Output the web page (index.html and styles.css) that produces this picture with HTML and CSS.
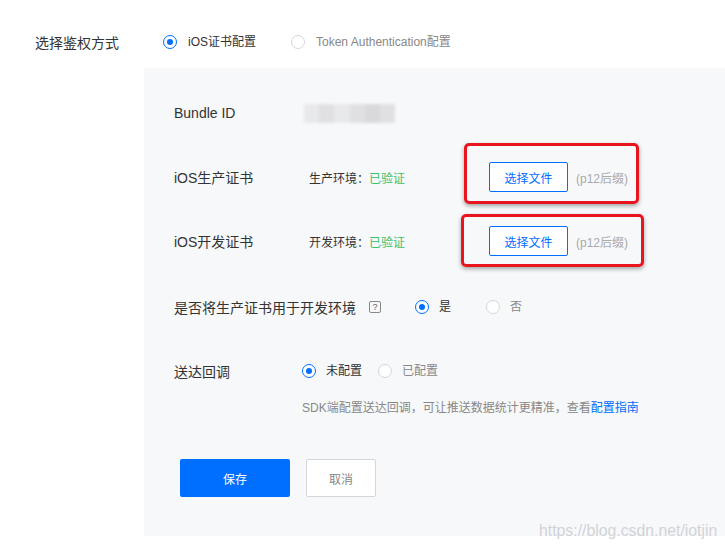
FILE: index.html
```html
<html>
  <head>
    <meta charset="utf-8">
    <title>选择鉴权方式</title>
    <link rel="stylesheet" href="styles.css">
  </head>
  <body>
    <div class="auth-row">
      <span class="auth-title">选择鉴权方式</span>
      <label class="radio radio-top checked"><i></i>iOS证书配置</label>
      <label class="radio radio-top muted"><i></i>Token Authentication配置</label>
    </div>

    <div class="panel">
      <div class="row row-bundle">
        <span class="row-label">Bundle ID</span>
        <span class="bundle-blur"><b></b><b></b><b></b><b></b><b></b><b></b></span>
      </div>

      <div class="row row-cert">
        <span class="row-label">iOS生产证书</span>
        <span class="status">生产环境：<em>已验证</em></span>
        <span class="file-group">
          <button class="btn-file">选择文件</button>
          <span class="hint">(p12后缀)</span>
          <span class="mark mark-one"></span>
        </span>
      </div>

      <div class="row row-cert">
        <span class="row-label">iOS开发证书</span>
        <span class="status">开发环境：<em>已验证</em></span>
        <span class="file-group">
          <button class="btn-file">选择文件</button>
          <span class="hint">(p12后缀)</span>
          <span class="mark mark-two"></span>
        </span>
      </div>

      <div class="row row-reuse">
        <span class="row-label-auto">是否将生产证书用于开发环境</span>
        <span class="help">?</span>
        <label class="radio radio-yes checked"><i></i>是</label>
        <label class="radio muted"><i></i>否</label>
      </div>

      <div class="row row-callback">
        <span class="row-label narrow">送达回调</span>
        <label class="radio radio-cb checked"><i></i>未配置</label>
        <label class="radio muted"><i></i>已配置</label>
      </div>

      <div class="tip">SDK端配置送达回调，可让推送数据统计更精准，查看<a href="#">配置指南</a></div>

      <div class="actions">
        <button class="btn-save">保存</button>
        <button class="btn-cancel">取消</button>
      </div>
    </div>

    <div class="watermark">https://blog.csdn.net/iotjin</div>
  </body>
</html>
```

FILE: styles.css
```css
:root {
  --blue: #006eff;
  --green: #3cbf6a;
  --panel: #f7f8fa;
}
body {
  margin: 0;
  font-family: 'Liberation Sans', 'Noto Sans CJK SC', sans-serif;
  color: #333;
  background: #fff;
  position: relative;
  width: 725px;
  height: 549px;
  overflow: hidden;
}
button {
  font-family: inherit;
  cursor: pointer;
}

/* top radio row */
.auth-row {
  display: flex;
  align-items: center;
  height: 28px;
  padding-top: 28px;
  padding-left: 35px;
}
.auth-title {
  width: 128px;
  font-size: 14px;
}

/* radios */
.radio {
  display: flex;
  align-items: center;
  font-size: 12px;
  color: #333;
  line-height: 16px;
}
.radio i {
  box-sizing: border-box;
  width: 14px;
  height: 14px;
  border: 1px solid #d3d6db;
  border-radius: 50%;
  background: #fff;
  margin-right: 10px;
  position: relative;
}
.radio.checked i {
  border-color: var(--blue);
}
.radio.checked i::after {
  content: '';
  position: absolute;
  left: 3px;
  top: 3px;
  width: 6px;
  height: 6px;
  border-radius: 50%;
  background: var(--blue);
}
.radio.muted {
  color: #888;
}
.radio-top i {
  margin-right: 11px;
}
.radio-top.checked {
  margin-right: 35px;
}
.radio-yes {
  margin-right: 35px;
}
.radio-cb {
  margin-right: 16px;
}

/* panel */
.panel {
  margin: 12px 0 0 144px;
  background: var(--panel);
  height: 468px;
  box-sizing: border-box;
  padding: 30px 0 0 30px;
}
.row {
  display: flex;
  align-items: center;
  height: 30px;
}
.row-label {
  width: 130px;
  font-size: 14px;
  flex: none;
}
.row-label.narrow {
  width: 128px;
}
.row-label-auto {
  font-size: 14px;
}
.row-cert {
  margin-top: 34px;
}
.row-reuse {
  margin-top: 36px;
}
.row-callback {
  margin-top: 34px;
}

.bundle-blur {
  display: flex;
  width: 91px;
  height: 19px;
  filter: blur(1.5px);
  opacity: .75;
}
.bundle-blur b {
  flex: 1;
  background: #e4e4e6;
}
.bundle-blur b:nth-child(2n) {
  background: #d9d9dc;
}
.bundle-blur b:nth-child(5) {
  background: #cfcfd2;
}

.status {
  width: 180px;
  margin-left: 5px;
  font-size: 12px;
  color: #333;
}
.status em {
  font-style: normal;
  color: var(--green);
}
.file-group {
  position: relative;
  display: flex;
  align-items: center;
}
.btn-file {
  width: 79px;
  height: 30px;
  border: 1px solid var(--blue);
  border-radius: 2px;
  background: #fff;
  color: var(--blue);
  font-size: 12px;
  padding: 0;
}
.hint {
  margin-left: 8px;
  font-size: 12px;
  color: #aaa;
}
.mark {
  position: absolute;
  border: 3px solid #e8141e;
  border-radius: 5px;
  box-shadow: 0 2px 4px rgba(0, 0, 0, .35);
  box-sizing: border-box;
}
.mark-one {
  left: -25px;
  top: -19px;
  width: 175px;
  height: 61px;
}
.mark-two {
  left: -28px;
  top: -12px;
  width: 183px;
  height: 53px;
}

.help {
  box-sizing: border-box;
  width: 12px;
  height: 12px;
  margin: 0 34px 0 13px;
  border: 1px solid #888;
  border-radius: 2px;
  font-size: 9px;
  line-height: 10px;
  text-align: center;
  color: #666;
}

.tip {
  margin: 12px 0 0 128px;
  font-size: 12px;
  line-height: 20px;
  color: #888;
}
.tip a {
  color: var(--blue);
  text-decoration: none;
}

.actions {
  display: flex;
  gap: 16px;
  margin: 41px 0 0 6px;
}
.btn-save,
.btn-cancel {
  height: 38px;
  font-size: 12px;
  border-radius: 2px;
  padding: 0;
}
.btn-save {
  width: 110px;
  border: none;
  background: var(--blue);
  color: #fff;
}
.btn-cancel {
  width: 70px;
  border: 1px solid #d3d6db;
  background: #fff;
  color: #888;
}

.watermark {
  position: absolute;
  left: 539px;
  top: 520px;
  font-size: 15.8px;
  line-height: 22px;
  color: rgba(200, 200, 205, .8);
  white-space: nowrap;
}
```
